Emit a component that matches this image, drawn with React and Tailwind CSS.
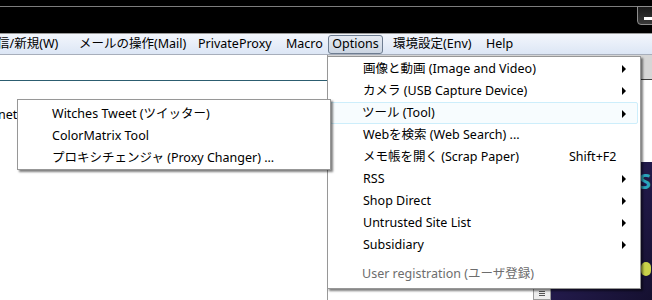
import React from "react";

const font = { fontFamily: '"Noto Sans", "Noto Sans CJK JP", sans-serif' };

const menuItems = [
  { label: "画像と動画 (Image and Video)", sub: true },
  { label: "カメラ (USB Capture Device)", sub: true },
  { label: "ツール (Tool)", sub: true, active: true },
  { label: "Webを検索 (Web Search) ..." },
  { label: "メモ帳を開く (Scrap Paper)", key: "Shift+F2" },
  { label: "RSS", sub: true },
  { label: "Shop Direct", sub: true },
  { label: "Untrusted Site List", sub: true },
  { label: "Subsidiary", sub: true },
];

const Arrow = () => (
  <svg width="5" height="8" viewBox="0 0 5 8" className="absolute right-[10px] top-[7px]">
    <path d="M0 0 L4 4 L0 8 Z" fill="#000" />
  </svg>
);

const Row = ({ item }) => (
  <div
    className={
      "relative h-[22px] flex items-center " +
      (item.active
        ? "mx-[2px] border border-[#cdeefb] bg-[#f7fcfe] rounded-[2px] pl-[31px]"
        : "mx-[3px] pl-[32px]")
    }
  >
    <span className="text-[12.5px] text-black whitespace-nowrap">{item.label}</span>
    {item.key && (
      <span className="absolute left-[238px] text-[12.5px] text-black">{item.key}</span>
    )}
    {item.sub && <Arrow />}
  </div>
);

const App = () => {
  return (
    <div className="relative w-[652px] h-[300px] overflow-hidden bg-white" style={font}>
      {/* title bar */}
      <div className="h-[34px] bg-black relative border-b border-[#9a9a9a]">
        <div className="absolute left-0 top-[6px] w-[638px] h-px bg-[#7c7c7c]" />
        <div className="absolute left-[637px] top-[6px] w-[20px] h-[19px] border border-[#8d8d8d] rounded-bl-[4px] bg-gradient-to-b from-[#1a1a1a] to-[#3a3a3a]">
          <div className="absolute left-[6px] top-[10px] w-[8px] h-[3px] bg-white" />
        </div>
      </div>

      {/* menubar */}
      <div className="h-[21px] flex items-center bg-gradient-to-b from-[#f3f6fc] to-[#dce6f5] border-b border-[#a7aebb] text-[12.5px] text-black whitespace-nowrap">
        <span className="ml-[-3px] w-[82px] shrink-0">信/新規(W)</span>
        <span className="w-[119px] shrink-0">メールの操作(Mail)</span>
        <span className="w-[88px] shrink-0">PrivateProxy</span>
        <span className="w-[42px] shrink-0">Macro</span>
        <span className="w-[55px] h-[19px] mr-[10px] shrink-0 flex items-center justify-center border border-[#6e7d91] rounded-[3px] bg-gradient-to-b from-[#e6ebf3] to-[#ccd5e2]">
          Options
        </span>
        <span className="w-[93px] shrink-0">環境設定(Env)</span>
        <span>Help</span>
      </div>

      {/* content */}
      <div className="flex h-[245px]">
        <div className="w-[328px] border-r border-[#9a9a9a] flex flex-col">
          <div className="h-[26px] border-b border-[#2c5d70]" />
          <div className="pt-[25px] text-[12.5px] text-black ml-[-2px]">net</div>
        </div>
        <div className="flex-1 flex">
          <div className="flex-1 flex flex-col">
            <div className="h-[25px] bg-[#d6d6d6] border-b border-[#3d3d3d]" />
            <div className="h-[82px]" />
            <div className="flex-1 flex">
              <div className="w-[205px]" />
              <div className="w-[18px] self-end h-[14px] border border-[#9a9a9a] bg-[#ececec] flex flex-col items-center justify-center gap-px">
                <div className="w-[6px] h-px bg-[#555]" />
                <div className="w-[6px] h-px bg-[#555]" />
                <div className="w-[6px] h-px bg-[#555]" />
              </div>
              <div className="flex-1 bg-gradient-to-br from-[#0b1a2a] via-[#221a4a] to-[#151030] relative">
                <span className="absolute left-[88px] top-[2px] text-[22px] font-bold text-[#2aa4bd]">S</span>
                <div className="absolute left-[90px] top-[100px] w-[10px] h-[14px] rounded-full bg-[#c9d24a]" />
              </div>
            </div>
          </div>
        </div>
      </div>

      {/* Options dropdown */}
      <div className="absolute left-[327px] top-[56px] w-[314px] h-[233px] bg-white border border-[#979797] shadow-[2px_2px_2px_rgba(0,0,0,0.5)] pt-[1px]">
        {menuItems.map((item) => (
          <Row key={item.label} item={item} />
        ))}
        <div className="h-[7px]" />
        <div className="h-[22px] flex items-center pl-[34px] text-[12.5px] text-[#6d6d6d]">
          User registration (ユーザ登録)
        </div>
      </div>

      {/* Tool submenu */}
      <div className="absolute left-[17px] top-[99px] w-[314px] h-[71px] bg-white border border-[#979797] shadow-[2px_2px_2px_rgba(0,0,0,0.5)] pt-[3px]">
        {["Witches Tweet (ツイッター)", "ColorMatrix Tool", "プロキシチェンジャ (Proxy Changer) ..."].map((t) => (
          <div key={t} className="h-[22px] flex items-center pl-[34px] text-[12.5px] text-black whitespace-nowrap">
            {t}
          </div>
        ))}
      </div>
    </div>
  );
};

export default App;
